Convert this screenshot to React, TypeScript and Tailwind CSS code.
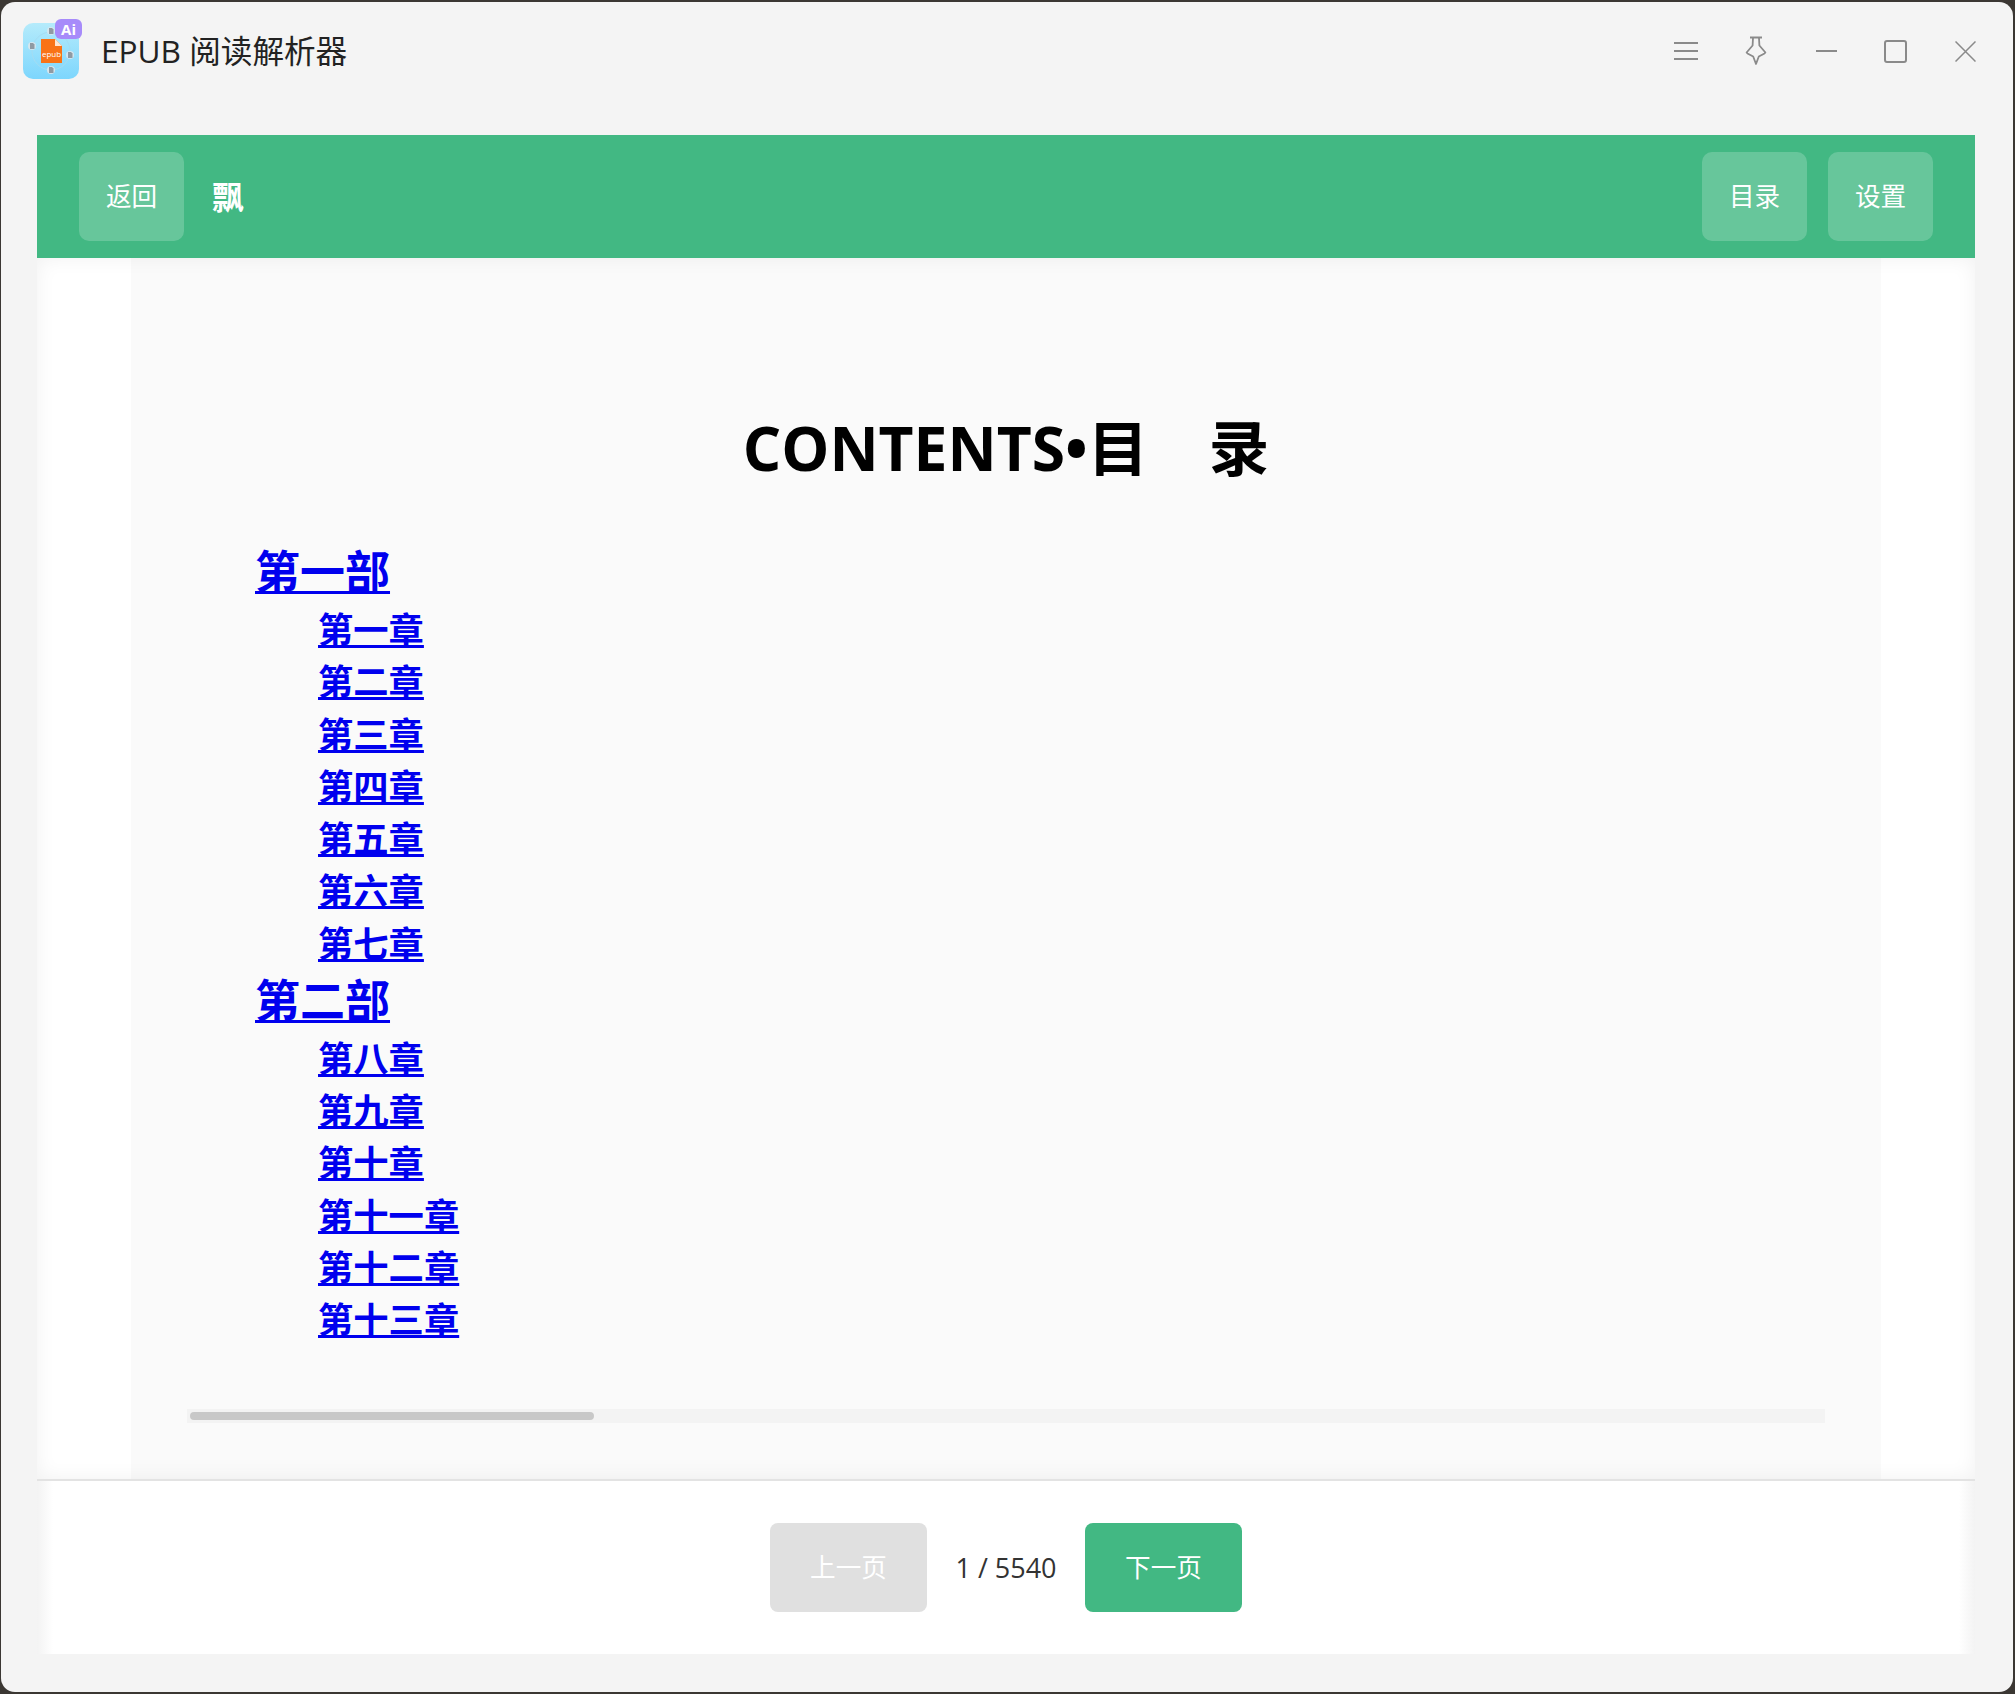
const FONT = "font-['Open_Sans','Noto_Sans_CJK_SC',sans-serif]";

const PART_ONE = ['第一章', '第二章', '第三章', '第四章', '第五章', '第六章', '第七章'];
const PART_TWO = ['第八章', '第九章', '第十章', '第十一章', '第十二章', '第十三章'];

function SmallDoc({ x, y }: { x: number; y: number }) {
  return (
    <g transform={`translate(${x} ${y})`}>
      <circle cx="0" cy="0" r="4" fill="#d5e6ee" />
      <path d="M-2 -3 H1 L2.5 -1.5 V3 H-2 Z" fill="#8f9aa3" />
    </g>
  );
}

function AppLogo() {
  return (
    <svg width="60" height="60" viewBox="0 0 60 60" className="shrink-0">
      <defs>
        <linearGradient id="logoBg" x1="0" y1="0" x2="0" y2="1">
          <stop offset="0" stopColor="#b5ebfb" />
          <stop offset="1" stopColor="#7dd6fd" />
        </linearGradient>
      </defs>
      <rect x="0" y="4" width="56" height="56" rx="10" fill="url(#logoBg)" />
      <circle cx="28" cy="32" r="19" fill="none" stroke="#a5dcf2" strokeWidth="1" />
      <SmallDoc x={28} y={12} />
      <SmallDoc x={9} y={27} />
      <SmallDoc x={47} y={36} />
      <SmallDoc x={28} y={51} />
      <path d="M18 20 H32 L39 27 V44 H18 Z" fill="#f97316" />
      <path d="M32 20 L39 27 H32 Z" fill="#fde6d3" />
      <text x="28.5" y="38" textAnchor="middle" fontSize="8" fill="#fff" fontFamily="Open Sans, sans-serif">
        epub
      </text>
      <rect x="32" y="0" width="27" height="20" rx="6" fill="#a78bfa" />
      <text x="45.5" y="16" textAnchor="middle" fontSize="15" fontWeight="700" fill="#fff" fontFamily="Open Sans, sans-serif">
        Ai
      </text>
    </svg>
  );
}

function MenuIcon() {
  return (
    <svg width="24" height="20" viewBox="0 0 24 20" fill="none" stroke="#8a8a8a" strokeWidth="2">
      <path d="M0 2 H24 M0 10 H24 M0 18 H24" />
    </svg>
  );
}

function PinIcon() {
  return (
    <svg width="22" height="30" viewBox="0 0 22 30" fill="none" stroke="#8a8a8a" strokeWidth="1.8">
      <path d="M5 1.5 H17" />
      <path d="M8 2 L7.6 9.5 L1.6 16.5 L2.5 17.5 L8.2 20.5 L11 28 L13.8 20.5 L19.5 17.5 L20.4 16.5 L14.4 9.5 L14 2" strokeLinejoin="round" />
    </svg>
  );
}

function MinIcon() {
  return (
    <svg width="21" height="4" viewBox="0 0 21 4" fill="none" stroke="#8a8a8a" strokeWidth="2">
      <path d="M0 2 H21" />
    </svg>
  );
}

function MaxIcon() {
  return (
    <svg width="23" height="23" viewBox="0 0 23 23" fill="none" stroke="#8a8a8a" strokeWidth="2">
      <rect x="1" y="1" width="21" height="21" rx="2" />
    </svg>
  );
}

function CloseIcon() {
  return (
    <svg width="21" height="21" viewBox="0 0 21 21" fill="none" stroke="#8a8a8a" strokeWidth="1.5">
      <path d="M0.5 0.5 L20.5 20.5 M20.5 0.5 L0.5 20.5" />
    </svg>
  );
}

function BarButton({ label }: { label: string }) {
  return (
    <button className="w-[105px] h-[89px] rounded-[10px] bg-white/20 text-white text-[25.6px] pt-[2px]">
      {label}
    </button>
  );
}

function ChapterLink({ label }: { label: string }) {
  return (
    <div className="h-[52.26px] leading-[52.26px] pl-[63px] text-[35.3px] font-bold">
      <a className="underline decoration-[3px] text-[#0000ee]">{label}</a>
    </div>
  );
}

function PartLink({ label }: { label: string }) {
  return (
    <div className="h-[63px] leading-[64px] text-[45px] font-bold">
      <a className="underline decoration-[3px] text-[#0000ee]">{label}</a>
    </div>
  );
}

export default function App() {
  return (
    <div className={`h-screen bg-[#3b3733] pt-[2px] pb-[2px] pl-[1px] pr-[2px] ${FONT}`}>
      <div className="h-full rounded-[14px] bg-[#f4f4f4] flex flex-col overflow-hidden">
        {/* Title bar */}
        <div className="h-[133px] shrink-0 flex items-start pt-[17px] pl-[22px] pr-[37px]">
          <AppLogo />
          <span className="ml-[18px] mt-[10px] text-[31.6px] leading-[44px] text-[#222]">EPUB 阅读解析器</span>
          <div className="ml-auto flex items-center h-[64px]">
            <MenuIcon />
            <div className="ml-[47px]">
              <PinIcon />
            </div>
            <div className="ml-[49px]">
              <MinIcon />
            </div>
            <div className="ml-[47px]">
              <MaxIcon />
            </div>
            <div className="ml-[48px]">
              <CloseIcon />
            </div>
          </div>
        </div>

        {/* Reader panel */}
        <div className="flex-1 ml-[36px] mr-[38px] flex flex-col min-h-0">
          <div className="h-[123px] shrink-0 bg-[#42b883] flex items-center px-[42px] pb-[1px]">
            <BarButton label="返回" />
            <span className="ml-[28px] pt-[2px] text-[32px] font-bold text-white">飘</span>
            <div className="ml-auto flex gap-[21px]">
              <BarButton label="目录" />
              <BarButton label="设置" />
            </div>
          </div>

          <div className="relative flex-1 bg-white px-[94px] min-h-0">
            <div className="h-full bg-[#fafafa] px-[56px] pb-[56px] flex flex-col">
              <h1 className="mt-[158px] h-[64px] leading-[64px] text-[60.5px] font-bold text-black text-center">
                CONTENTS•目　录
              </h1>
              <div className="flex-1 mt-[60px] pl-[68px]">
                <PartLink label="第一部" />
                {PART_ONE.map((c) => (
                  <ChapterLink key={c} label={c} />
                ))}
                <PartLink label="第二部" />
                {PART_TWO.map((c) => (
                  <ChapterLink key={c} label={c} />
                ))}
              </div>
              <div className="h-[14px] shrink-0 bg-[#f3f3f3] flex items-center pl-[3px]">
                <div className="w-[404px] h-[8px] rounded-[4px] bg-[#c8c8c8]" />
              </div>
            </div>
            {/* soft edge over the page */}
            <div className="absolute inset-0 pointer-events-none shadow-[inset_0_0_20px_rgba(0,0,0,0.06)]" />
          </div>

          <div className="h-[175px] shrink-0 border-t-2 border-[#e3e3e3] bg-[linear-gradient(90deg,#f3f3f3,#ffffff_16px,#ffffff_calc(100%-16px),#f3f3f3)] flex items-center justify-center">
            <button className="w-[157px] h-[89px] rounded-[8px] bg-[#e0e0e0] text-white text-[25.6px] pt-[2px]">上一页</button>
            <span className="w-[158px] pt-[2px] text-center text-[27px] text-[#333]">1 / 5540</span>
            <button className="w-[157px] h-[89px] rounded-[8px] bg-[#42b883] text-white text-[25.6px] pt-[2px]">下一页</button>
          </div>
        </div>

        <div className="h-[38px] shrink-0" />
      </div>
    </div>
  );
}
